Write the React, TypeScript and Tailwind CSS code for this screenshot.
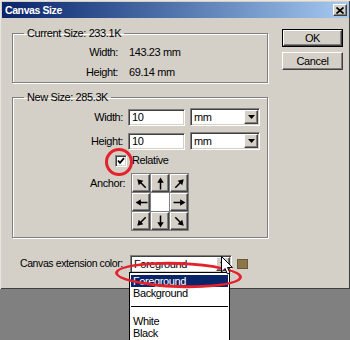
import React from "react";

const sunken =
  "border border-t-[#808080] border-l-[#808080] border-b-white border-r-white shadow-[inset_1px_1px_0_#404040,inset_-1px_-1px_0_#d4d0c8]";
const raised =
  "border border-t-white border-l-white border-b-[#404040] border-r-[#404040] shadow-[inset_-1px_-1px_0_#808080]";
const etched = "border border-[#808080] shadow-[inset_1px_1px_0_#fff,1px_1px_0_#fff]";

function DropArrow() {
  return (
    <svg width="7" height="4" viewBox="0 0 7 4">
      <path d="M0 0H7L3.5 4Z" fill="#000" />
    </svg>
  );
}

function Select({ value, className }: { value: string; className: string }) {
  return (
    <div className={`flex h-[18px] items-stretch bg-white ${sunken} ${className}`}>
      <span className="flex flex-1 items-center pl-[3px] leading-none">{value}</span>
      <span className={`m-[1px] flex w-[14px] items-center justify-center bg-[#d4d0c8] ${raised}`}>
        <DropArrow />
      </span>
    </div>
  );
}

function Arrow({ rot }: { rot: string }) {
  return (
    <svg width="13" height="13" viewBox="0 0 12 12" className={rot}>
      <path d="M6 0.5L9 5.4H6.7V11.5H5.3V5.4H3Z" fill="#000" />
    </svg>
  );
}

const anchorCells = [
  "-rotate-45",
  "rotate-0",
  "rotate-45",
  "-rotate-90",
  "",
  "rotate-90",
  "-rotate-[135deg]",
  "rotate-180",
  "rotate-[135deg]",
];

export default function App() {
  return (
    <div className="relative h-[340px] w-[350px] overflow-hidden bg-[#808080] font-['Liberation_Sans',Arial,sans-serif] text-[11px] tracking-[-0.4px] text-black">
      <div className="flex h-[289px] flex-col border-t border-l border-[#e8e6e0] bg-[#d4d0c8] p-[1px] shadow-[inset_-1px_-1px_0_#404040]">
        {/* title bar */}
        <div className="flex h-[16px] items-center justify-between bg-gradient-to-r from-[#0a246a] to-[#a6caf0] pl-[3px] pr-[2px]">
          <span className="text-[10.5px] font-bold leading-none text-white">Canvas Size</span>
          <span className={`flex h-[12px] w-[14px] items-center justify-center bg-[#d4d0c8] ${raised}`}>
            <svg width="8" height="7" viewBox="0 0 8 7">
              <path d="M0.5 0.5L7.5 6.5M7.5 0.5L0.5 6.5" stroke="#000" strokeWidth="1.7" />
            </svg>
          </span>
        </div>

        <div className="flex pl-[10px] pt-[9px]">
          <div className="flex w-[256px] flex-col gap-[8px]">
            {/* Current size */}
            <fieldset className={`${etched} pb-[2px]`}>
              <legend className="ml-[11px] px-[3px] leading-[13px]">Current Size: 233.1K</legend>
              <div className="flex flex-col gap-[4px] pt-[4px]">
                <div className="flex h-[16px] items-center">
                  <span className="w-[105px] text-right">Width:</span>
                  <span className="pl-[11px]">143.23 mm</span>
                </div>
                <div className="flex h-[16px] items-center">
                  <span className="w-[105px] text-right">Height:</span>
                  <span className="pl-[11px]">69.14 mm</span>
                </div>
              </div>
            </fieldset>

            {/* New size */}
            <fieldset className={`${etched} pb-[6px]`}>
              <legend className="ml-[11px] px-[3px] leading-[13px]">New Size: 285.3K</legend>
              <div className="flex flex-col pt-[4px]">
                <div className="flex h-[18px] items-center">
                  <span className="w-[110px] text-right">Width:</span>
                  <div className={`ml-[5px] flex h-[17px] w-[57px] items-center bg-white pl-[3px] ${sunken}`}>10</div>
                  <Select value="mm" className="ml-[5px] w-[70px]" />
                </div>
                <div className="mt-[6px] flex h-[18px] items-center">
                  <span className="w-[110px] text-right">Height:</span>
                  <div className={`ml-[5px] flex h-[17px] w-[57px] items-center bg-white pl-[3px] ${sunken}`}>10</div>
                  <Select value="mm" className="ml-[5px] w-[70px]" />
                </div>
                <div className="mt-[4px] flex h-[13px] items-center pl-[102px]">
                  <span className={`flex h-[12px] w-[12px] items-center justify-center bg-white ${sunken}`}>
                    <svg width="8" height="8" viewBox="0 0 8 8">
                      <path d="M1 3.5L3 5.8L7 1.2" stroke="#000" strokeWidth="1.8" fill="none" />
                    </svg>
                  </span>
                  <span className="pl-[5px]">Relative</span>
                </div>
                <div className="mt-[6px] flex items-start pl-[77px]">
                  <span className="pt-[2px]">Anchor:</span>
                  <div className="ml-[6px] grid grid-cols-3 gap-px border border-[#808080] bg-[#808080]">
                    {anchorCells.map((r, i) =>
                      r === "" ? (
                        <div key={i} className="h-[18px] w-[18px] bg-white" />
                      ) : (
                        <div key={i} className={`flex h-[18px] w-[18px] items-center justify-center bg-[#d4d0c8] ${raised}`}>
                          <Arrow rot={r} />
                        </div>
                      )
                    )}
                  </div>
                </div>
              </div>
            </fieldset>
          </div>

          {/* buttons */}
          <div className="ml-[14px] flex w-[61px] flex-col gap-[5px] pt-[2px]">
            <div className="border border-black">
              <div className={`flex h-[16px] items-center justify-center bg-[#d4d0c8] ${raised}`}>OK</div>
            </div>
            <div className={`flex h-[18px] items-center justify-center bg-[#d4d0c8] ${raised}`}>Cancel</div>
          </div>
        </div>

        {/* canvas extension color */}
        <div className="mt-[17px] flex items-center pl-[18px]">
          <span className="w-[110px] whitespace-nowrap text-[10.5px]">Canvas extension color:</span>
          <Select value="Foreground" className="w-[102px]" />
          <span className="ml-[5px] h-[10px] w-[11px] border border-[#6b5a36] bg-[#8c7548]" />
        </div>
      </div>

      {/* open dropdown list */}
      <div className="absolute left-[129px] top-[272px] flex h-[80px] w-[101px] flex-col border border-black bg-white px-[1px] pt-[2px]">
        <div className="flex h-[12px] items-center bg-[#0a246a] pl-[2px] leading-none text-white">Foreground</div>
        <div className="flex h-[13px] items-center pl-[2px] leading-none">Background</div>
        <div className="mt-[6px] h-px bg-black" />
        <div className="mt-[8px] flex h-[12px] items-center pl-[2px] leading-none">White</div>
        <div className="flex h-[13px] items-center pl-[2px] leading-none">Black</div>
      </div>

      {/* red highlight marks */}
      <div className="absolute left-[105px] top-[148px] h-[28px] w-[28px] rounded-full border-[3px] border-[#e3222b]" />
      <div className="absolute left-[115px] top-[262px] h-[26px] w-[127px] rotate-[2deg] rounded-[50%] border-[3px] border-[#e3222b]" />

      {/* mouse cursor */}
      <svg className="absolute left-[221px] top-[256px]" width="12" height="19" viewBox="0 0 12 19">
        <path d="M0.5 0.5V16L4 12.5L6.5 18L9 17L6.5 11.5H11.5Z" fill="#fff" stroke="#000" strokeWidth="1" />
      </svg>
    </div>
  );
}
